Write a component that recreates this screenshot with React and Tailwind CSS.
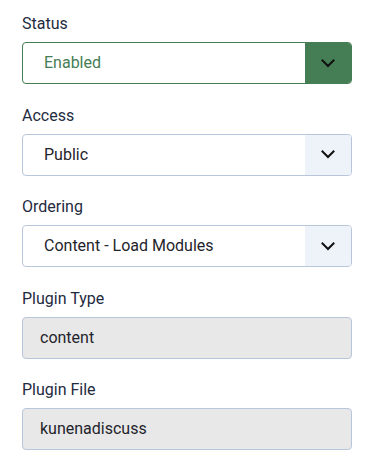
import React from 'react';

function Chevron() {
  return (
    <svg width="14" height="9" viewBox="0 0 14 9" fill="none">
      <path d="M1.5 1.5 L7 7 L12.5 1.5" stroke="#111" strokeWidth="2" strokeLinecap="square" />
    </svg>
  );
}

function Field({ label, children }) {
  return (
    <div className="mb-[19.5px]">
      <div className="text-[16px] leading-[24px] text-[#1f2b3e] mb-[6px]">{label}</div>
      {children}
    </div>
  );
}

function Select({ value, active }) {
  return (
    <div
      className={
        active
          ? 'flex h-[42px] rounded-[4px] border border-[#457d54] overflow-hidden bg-white'
          : 'flex h-[42px] rounded-[4px] border border-[#b8c6dc] overflow-hidden bg-white'
      }
    >
      <div
        className={
          active
            ? 'flex-1 flex items-center pl-[21px] text-[16px] text-[#457d54]'
            : 'flex-1 flex items-center pl-[21px] text-[16px] text-[#1f242b]'
        }
      >
        {value}
      </div>
      <div
        className={
          active
            ? 'w-[46px] flex items-center justify-center bg-[#457d54]'
            : 'w-[46px] flex items-center justify-center bg-[#eef2f9]'
        }
      >
        <Chevron />
      </div>
    </div>
  );
}

function ReadOnly({ value }) {
  return (
    <div className="flex items-center h-[42px] rounded-[4px] border border-[#b8c6dc] bg-[#e8e8e8] pl-[17px] text-[16px] text-[#1f242b]">
      {value}
    </div>
  );
}

export default function App() {
  return (
    <div className="bg-white w-[380px] h-[467px] px-[22px] pt-[12px] pr-[28px]" style={{ fontFamily: 'Roboto, sans-serif' }}>
      <Field label="Status">
        <Select value="Enabled" active />
      </Field>
      <Field label="Access">
        <Select value="Public" />
      </Field>
      <Field label="Ordering">
        <Select value="Content - Load Modules" />
      </Field>
      <Field label="Plugin Type">
        <ReadOnly value="content" />
      </Field>
      <Field label="Plugin File">
        <ReadOnly value="kunenadiscuss" />
      </Field>
    </div>
  );
}
